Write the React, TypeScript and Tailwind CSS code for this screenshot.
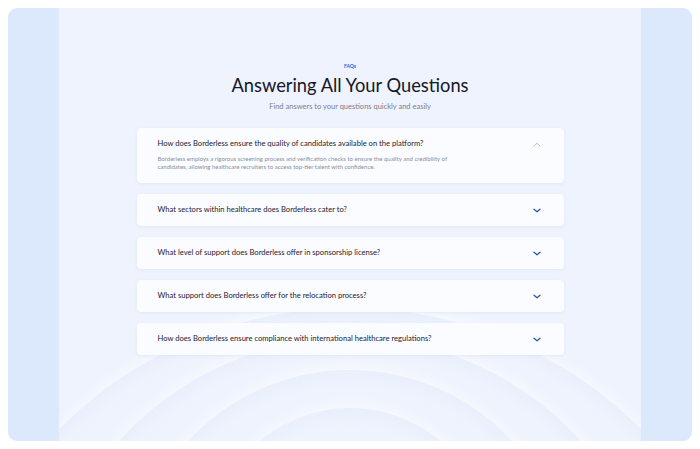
import React, { FC, useState } from 'react';

const faqs: [string, string | null][] = [
  [
    'How does Borderless ensure the quality of candidates available on the platform?',
    'Borderless employs a rigorous screening process and verification checks to ensure the quality and credibility of candidates, allowing healthcare recruiters to access top-tier talent with confidence.',
  ],
  ['What sectors within healthcare does Borderless cater to?', null],
  ['What level of support does Borderless offer in sponsorship license?', null],
  ['What support does Borderless offer for the relocation process?', null],
  ['How does Borderless ensure compliance with international healthcare regulations?', null],
];

const Chevron: FC<{ up?: boolean }> = ({ up }) => (
  <svg width="8" height="5" viewBox="0 0 8 5" className="mt-[1px]">
    <path
      d={up ? 'M1 4 L4 1.2 L7 4' : 'M1 1.2 L4 3.8 L7 1.2'}
      fill="none"
      stroke={up ? '#b3b7c2' : '#3158a8'}
      strokeWidth={up ? 0.9 : 1.3}
      strokeLinecap="round"
      strokeLinejoin="round"
    />
  </svg>
);

const Ring: FC<{ className: string }> = ({ className }) => (
  <div
    className={`pointer-events-none absolute left-1/2 -translate-x-1/2 rounded-full shadow-[0_-4px_14px_rgba(255,255,255,0.6),inset_0_5px_14px_rgba(214,225,246,0.25)] ${className}`}
  />
);

export default function App() {
  const [open, setOpen] = useState(0);

  return (
    <div className="h-[449px] w-[700px] bg-white p-2 font-['Lato',sans-serif]">
      <div className="relative flex h-[433px] overflow-hidden rounded-[9px] bg-[#dce8fc]">
        <div className="w-[51px]" />
        <div className="relative flex-1 overflow-hidden bg-[#eef3fd]">
          {/* soft rings */}
          <Ring className="top-[300px] h-[820px] w-[820px]" />
          <Ring className="top-[330px] h-[620px] w-[620px]" />
          <Ring className="top-[362px] h-[440px] w-[440px]" />
          <Ring className="top-[400px] h-[280px] w-[280px]" />

          <div className="relative flex flex-col items-center pt-[56px]">
            <span className="text-[5px] font-bold leading-none text-[#2a63d8]">FAQs</span>
            <h1 className="mt-[7px] text-[18.3px] leading-none text-[#15172a]">
              Answering All Your Questions
            </h1>
            <p className="mt-[9px] text-[7.5px] leading-none text-[#7b7f8c]">
              Find answers to your questions quickly and easily
            </p>

            <section className="mt-[17px] flex w-[427px] flex-col gap-[11px]">
              {faqs.map(([q, a], i) => (
                <div
                  key={q}
                  onClick={() => setOpen(open === i ? -1 : i)}
                  className="cursor-pointer rounded-[4px] bg-[#fbfcff] pl-[21px] pr-[23px] shadow-[0_1px_3px_rgba(200,212,235,0.35)]"
                >
                  <div className="flex h-[32px] items-center justify-between">
                    <span className="text-[7.6px] text-[#1e2030]">{q}</span>
                    <Chevron up={open === i} />
                  </div>
                  {open === i && a && (
                    <p className="-mt-[5px] w-[316px] pb-[11px] text-[6px] leading-[8.4px] text-[#8a8e9a]">
                      {a}
                    </p>
                  )}
                </div>
              ))}
            </section>
          </div>
        </div>
        <div className="w-[51px]" />
      </div>
    </div>
  );
}
